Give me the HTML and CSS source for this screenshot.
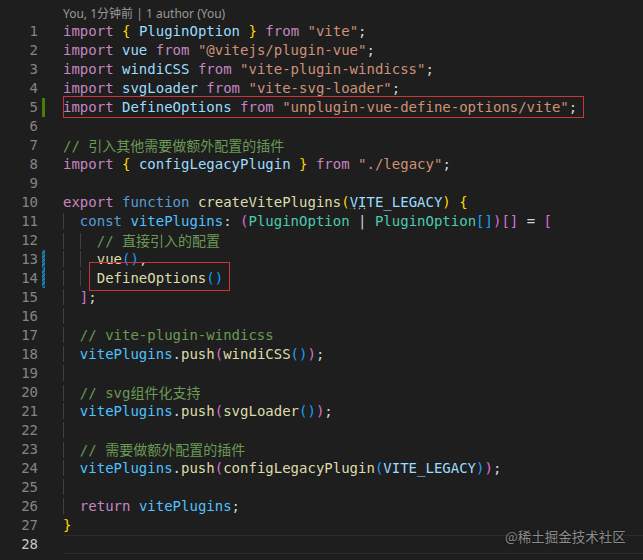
FILE: index.html
```html
<!DOCTYPE html>
<html>
<head>
<meta charset="utf-8">
<link rel="stylesheet" href="styles.css">
</head>
<body>
<div class="editor">
  <div class="lens"><span class="lens-text">You, 1分钟前 | 1 author (You)</span></div>
  <div class="row"><span class="ln">1</span><span class="deco"></span><span class="code"><span class="kw">import</span> <span class="b1">{</span> <span class="vr">PluginOption</span> <span class="b1">}</span> <span class="kw">from</span> <span class="st">"vite"</span>;</span></div>
  <div class="row"><span class="ln">2</span><span class="deco"></span><span class="code"><span class="kw">import</span> <span class="vr">vue</span> <span class="kw">from</span> <span class="st">"@vitejs/plugin-vue"</span>;</span></div>
  <div class="row"><span class="ln">3</span><span class="deco"></span><span class="code"><span class="kw">import</span> <span class="vr">windiCSS</span> <span class="kw">from</span> <span class="st">"vite-plugin-windicss"</span>;</span></div>
  <div class="row"><span class="ln">4</span><span class="deco"></span><span class="code"><span class="kw">import</span> <span class="vr">svgLoader</span> <span class="kw">from</span> <span class="st">"vite-svg-loader"</span>;</span></div>
  <div class="row"><span class="ln">5</span><span class="deco added"></span><span class="code"><span class="kw">import</span> <span class="vr">DefineOptions</span> <span class="kw">from</span> <span class="st">"unplugin-vue-define-options/vite"</span>;</span></div>
  <div class="row"><span class="ln">6</span><span class="deco"></span><span class="code"></span></div>
  <div class="row"><span class="ln">7</span><span class="deco"></span><span class="code"><span class="cm">// <span class="cjk">引入其他需要做额外配置的插件</span></span></span></div>
  <div class="row"><span class="ln">8</span><span class="deco"></span><span class="code"><span class="kw">import</span> <span class="b1">{</span> <span class="vr">configLegacyPlugin</span> <span class="b1">}</span> <span class="kw">from</span> <span class="st">"./legacy"</span>;</span></div>
  <div class="row"><span class="ln">9</span><span class="deco"></span><span class="code"></span></div>
  <div class="row"><span class="ln">10</span><span class="deco"></span><span class="code"><span class="kw">export</span> <span class="sto">function</span> <span class="fn">createVitePlugins</span><span class="b1">(</span><span class="vr"><span class="hint">VI</span>TE_LEGACY</span><span class="b1">)</span> <span class="b1">{</span></span></div>
  <div class="row"><span class="ln">11</span><span class="deco"></span><span class="code"><span class="ig">  </span><span class="sto">const</span> <span class="cn">vitePlugins</span>: <span class="b2">(</span><span class="ty">PluginOption</span> | <span class="ty">PluginOption</span><span class="b3">[]</span><span class="b2">)</span><span class="b2">[]</span> = <span class="b2">[</span></span></div>
  <div class="row"><span class="ln">12</span><span class="deco"></span><span class="code"><span class="ig">  </span><span class="ig">  </span><span class="cm">// <span class="cjk">直接引入的配置</span></span></span></div>
  <div class="row"><span class="ln">13</span><span class="deco modified"></span><span class="code"><span class="ig">  </span><span class="ig">  </span><span class="fn">vue</span><span class="b3">()</span>,</span></div>
  <div class="row"><span class="ln">14</span><span class="deco modified"></span><span class="code"><span class="ig">  </span><span class="ig">  </span><span class="fn">DefineOptions</span><span class="b3">()</span></span></div>
  <div class="row"><span class="ln">15</span><span class="deco"></span><span class="code"><span class="ig">  </span><span class="b2">]</span>;</span></div>
  <div class="row"><span class="ln">16</span><span class="deco"></span><span class="code"><span class="ig">  </span></span></div>
  <div class="row"><span class="ln">17</span><span class="deco"></span><span class="code"><span class="ig">  </span><span class="cm">// vite-plugin-windicss</span></span></div>
  <div class="row"><span class="ln">18</span><span class="deco"></span><span class="code"><span class="ig">  </span><span class="cn">vitePlugins</span>.<span class="fn">push</span><span class="b2">(</span><span class="fn">windiCSS</span><span class="b3">()</span><span class="b2">)</span>;</span></div>
  <div class="row"><span class="ln">19</span><span class="deco"></span><span class="code"><span class="ig">  </span></span></div>
  <div class="row"><span class="ln">20</span><span class="deco"></span><span class="code"><span class="ig">  </span><span class="cm">// svg<span class="cjk">组件化支持</span></span></span></div>
  <div class="row"><span class="ln">21</span><span class="deco"></span><span class="code"><span class="ig">  </span><span class="cn">vitePlugins</span>.<span class="fn">push</span><span class="b2">(</span><span class="fn">svgLoader</span><span class="b3">()</span><span class="b2">)</span>;</span></div>
  <div class="row"><span class="ln">22</span><span class="deco"></span><span class="code"><span class="ig">  </span></span></div>
  <div class="row"><span class="ln">23</span><span class="deco"></span><span class="code"><span class="ig">  </span><span class="cm">// <span class="cjk">需要做额外配置的插件</span></span></span></div>
  <div class="row"><span class="ln">24</span><span class="deco"></span><span class="code"><span class="ig">  </span><span class="cn">vitePlugins</span>.<span class="fn">push</span><span class="b2">(</span><span class="fn">configLegacyPlugin</span><span class="b3">(</span><span class="vr">VITE_LEGACY</span><span class="b3">)</span><span class="b2">)</span>;</span></div>
  <div class="row"><span class="ln">25</span><span class="deco"></span><span class="code"><span class="ig">  </span></span></div>
  <div class="row"><span class="ln">26</span><span class="deco"></span><span class="code"><span class="ig">  </span><span class="kw">return</span> <span class="cn">vitePlugins</span>;</span></div>
  <div class="row"><span class="ln">27</span><span class="deco"></span><span class="code"><span class="b1">}</span></span></div>
  <div class="row current"><span class="ln">28</span><span class="deco"></span><span class="code"></span></div>

  <div class="mark mark-line5"></div>
  <div class="mark mark-line14"></div>
  <div class="watermark">@稀土掘金技术社区</div>
</div>
</body>
</html>
```
FILE: styles.css
```css
html, body {
  margin: 0;
  padding: 0;
  background: #1e1e1e;
}

.editor {
  position: relative;
  width: 643px;
  height: 560px;
  overflow: hidden;
  background: #1e1e1e;
  padding-top: 5px;
  box-sizing: border-box;
  font-family: "DejaVu Sans Mono", "Liberation Mono", "Noto Sans CJK SC", monospace;
  font-size: 14px;
  color: #d4d4d4;
}

.lens {
  height: 17px;
  line-height: 17px;
  padding-left: 63px;
}

.lens-text {
  font-family: "Noto Sans", "Noto Sans CJK SC", sans-serif;
  font-size: 12px;
  color: #999999;
}

.row {
  display: flex;
  height: 19px;
  line-height: 19px;
}

.ln {
  width: 38px;
  flex: none;
  text-align: right;
  color: #858585;
}

.deco {
  width: 3px;
  flex: none;
  margin-left: 4px;
}

.deco.added {
  background: #487e02;
}

.deco.modified {
  background: repeating-linear-gradient(-45deg, #1b81a8 0 2px, #0f4a61 2px 3px);
}

.code {
  flex: 1;
  margin-left: 18px;
  white-space: pre;
}

.current .ln {
  color: #c6c6c6;
}

.current .code {
  height: 17px;
  border-top: 1px solid #2c2c2c;
  border-bottom: 1px solid #2c2c2c;
}

.ig {
  box-shadow: inset 1px 0 0 #404040;
}

.kw { color: #c586c0; }
.st { color: #ce9178; }
.vr { color: #9cdcfe; }
.cn { color: #4fc1ff; }
.fn { color: #dcdcaa; }
.ty { color: #4ec9b0; }
.sto { color: #569cd6; }
.cm { color: #6a9955; }
.b1 { color: #ffd700; }
.b2 { color: #da70d6; }
.b3 { color: #179fff; }

.cjk {
  font-family: "Noto Sans CJK SC", sans-serif;
  font-size: 14px;
}

.hint {
  background-image: radial-gradient(circle, #a0a0a0 0.8px, transparent 1.1px);
  background-size: 5px 3px;
  background-repeat: repeat-x;
  background-position: 2px 100%;
}

.mark {
  position: absolute;
  border: 1px solid #c83737;
  box-sizing: border-box;
}

.mark-line5 {
  left: 63px;
  top: 96px;
  width: 521px;
  height: 22px;
}

.mark-line14 {
  left: 89px;
  top: 262px;
  width: 141px;
  height: 29px;
}

.watermark {
  position: absolute;
  left: 505px;
  top: 526px;
  font-family: "Noto Sans CJK SC", sans-serif;
  font-size: 13.5px;
  line-height: 20px;
  color: #8a8a8a;
  text-shadow: 0 0 2px rgba(0, 0, 0, 0.6);
}
```
